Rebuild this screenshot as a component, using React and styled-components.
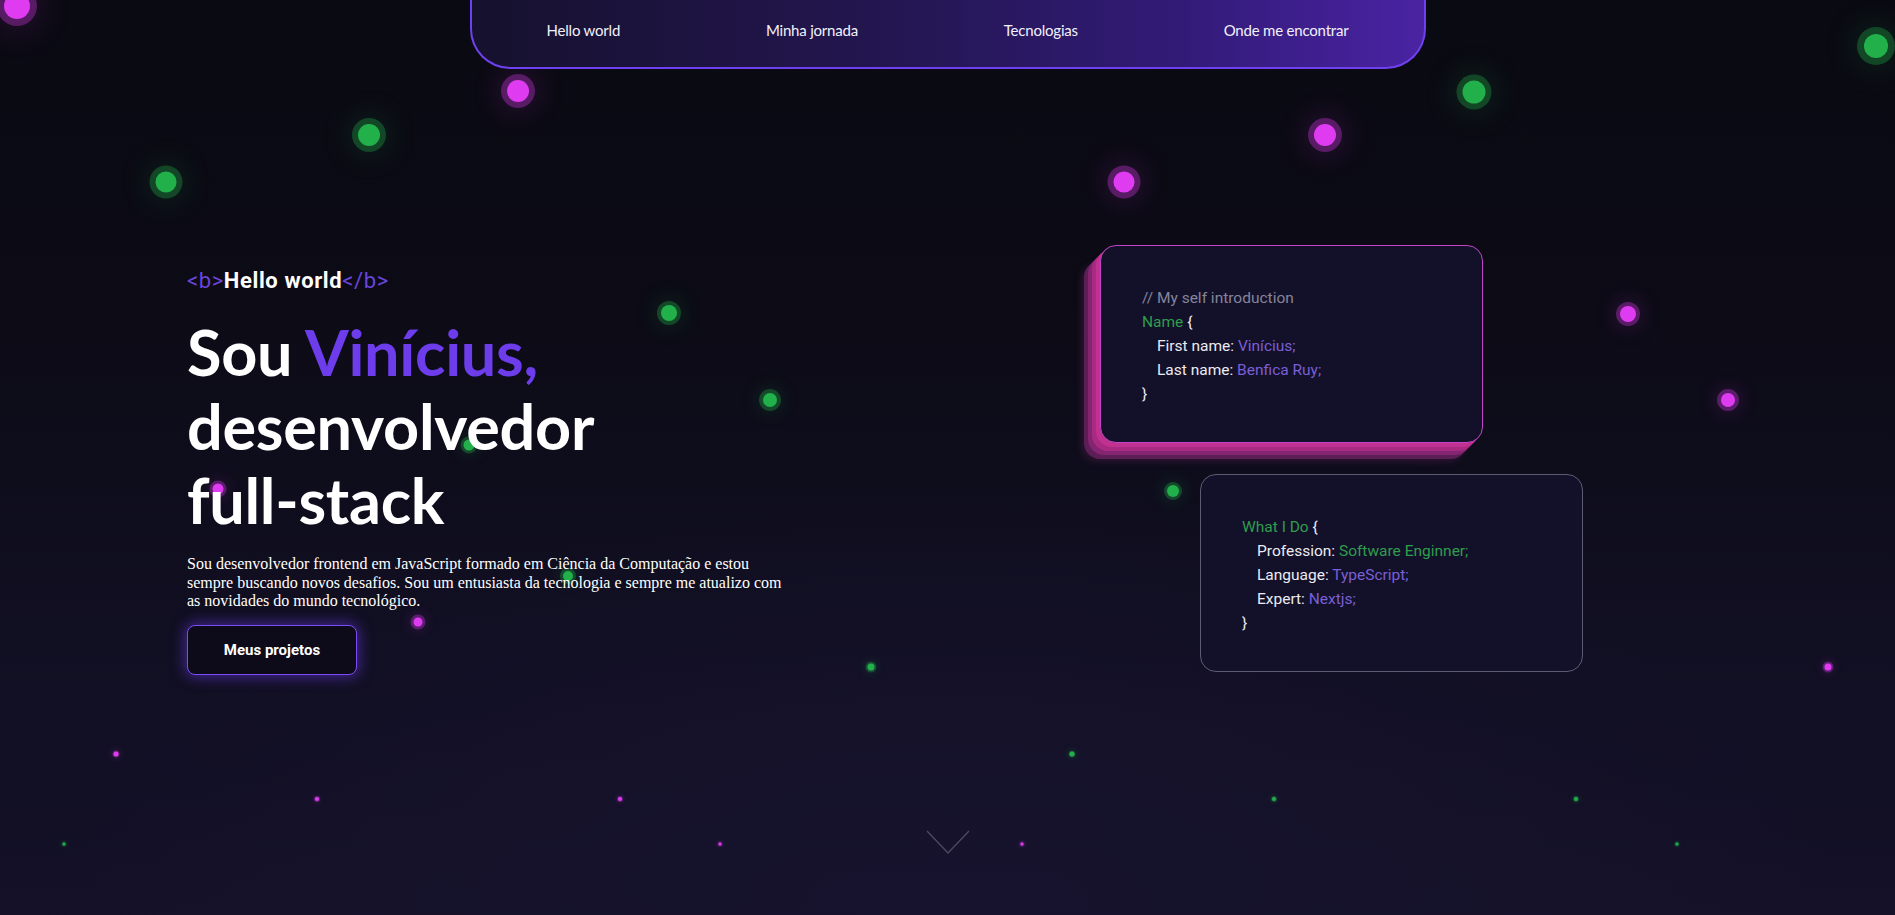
import React from 'react'
import styled, { createGlobalStyle } from 'styled-components'

const GlobalStyle = createGlobalStyle`
  * { box-sizing: border-box; }
  html, body { margin: 0; padding: 0; background: #0b0b14; }
  body { overflow: hidden; }
`

const Page = styled.div`
  position: relative;
  width: 100%;
  height: 915px;
  overflow: hidden;
  background: radial-gradient(ellipse 900px 420px at 50% 100%, #17132e 0%, rgba(23, 19, 46, 0) 100%),
    linear-gradient(180deg, #0a0a12 0%, #0c0b16 35%, #110f22 70%, #141128 100%);
`

const Particles = styled.div`
  position: absolute;
  inset: 0;
  pointer-events: none;
  z-index: 0;
`

const Dot = styled.span`
  position: absolute;
  border-radius: 50%;
  transform: translate(-50%, -50%);
  width: ${p => p.$s}px;
  height: ${p => p.$s}px;
  background: ${p => (p.$c === 'g' ? '#22b04b' : '#df3cf2')};
  box-shadow: 0 0 0 ${p => Math.max(1, Math.round(p.$s * 0.28))}px
      ${p => (p.$c === 'g' ? 'rgba(34,176,75,0.32)' : 'rgba(223,60,242,0.32)')},
    0 0 ${p => p.$s * 1.4}px ${p => p.$s * 0.4}px
      ${p => (p.$c === 'g' ? 'rgba(34,176,75,0.16)' : 'rgba(223,60,242,0.16)')};
`

const Nav = styled.nav`
  position: relative;
  z-index: 2;
  margin: 0 auto;
  width: 956px;
  height: 69px;
  display: flex;
  align-items: center;
  justify-content: space-between;
  padding: 0 75px 7px;
  border: 2px solid #6f40ef;
  border-top: none;
  border-radius: 0 0 40px 40px;
  background: linear-gradient(90deg, #16112e 0%, #241652 45%, #321b78 75%, #4a23a2 100%);
`

const NavLink = styled.a`
  font-family: Lato, 'Open Sans', sans-serif;
  font-size: 15px;
  color: #f2f0fa;
  text-decoration: none;
  letter-spacing: -0.2px;
`

const Hero = styled.main`
  position: relative;
  z-index: 1;
  display: flex;
  justify-content: space-between;
  align-items: flex-start;
  padding: 176px 312px 0 187px;
`

const Intro = styled.section`
  width: 610px;
  padding-top: 24px;
`

const Tag = styled.div`
  font-family: Roboto, 'Open Sans', sans-serif;
  font-size: 22px;
  line-height: 24px;
  color: #fff;
  font-weight: 700;
  letter-spacing: 0.6px;
`

const TagMark = styled.span`
  color: #6a45dc;
  font-weight: 400;
`

const Title = styled.h1`
  margin: 22px 0 0;
  font-family: Lato, 'Open Sans', sans-serif;
  font-weight: 700;
  font-size: 63px;
  line-height: 74px;
  color: #fff;
  letter-spacing: -0.3px;
`

const Accent = styled.span`
  color: #6d3ceb;
`

const Lead = styled.p`
  margin: 18px 0 0;
  font-family: 'Liberation Serif', 'Times New Roman', serif;
  font-size: 16px;
  line-height: 18.5px;
  color: #fff;
`

const Button = styled.button`
  margin-top: 14px;
  width: 170px;
  height: 50px;
  border: 1px solid #7b4cf5;
  border-radius: 8px;
  background: #0d0b1a;
  color: #fff;
  font-family: Roboto, sans-serif;
  font-weight: 700;
  font-size: 15px;
  box-shadow: 0 0 14px 2px rgba(110, 60, 240, 0.55);
  cursor: pointer;
`

const Cards = styled.aside`
  display: flex;
  flex-direction: column;
  align-items: flex-end;
  gap: 31px;
`

const Card = styled.div`
  width: 383px;
  height: 198px;
  padding: 40px 0 0 41px;
  margin-right: ${p => (p.$stack ? 100 : 0)}px;
  border-radius: 16px;
  background: #13112a;
  border: 1px solid ${p => (p.$stack ? '#c443c6' : '#5e5a74')};
  box-shadow: ${p =>
    p.$stack
      ? `-4px 4px 0 #c1318f, -8px 8px 0 #a92a82, -12px 12px 0 #852572, -16px 16px 0 #5b1e55, -19px 19px 6px #2c1430`
      : 'none'};
  font-family: Roboto, 'Open Sans', sans-serif;
  font-size: 15.5px;
  line-height: 24px;
  color: #ecebf2;
`

const Line = styled.div`
  padding-left: ${p => (p.$indent ? 15 : 0)}px;
  white-space: nowrap;
`

const Comment = styled.span`
  color: #85849a;
`

const Key = styled.span`
  color: #2f9d4b;
`

const Value = styled.span`
  color: ${p => (p.$green ? '#2f9d4b' : '#7a5fd6')};
`

const ScrollHint = styled.div`
  position: relative;
  z-index: 1;
  display: flex;
  justify-content: center;
  margin-top: 155px;
`

const dots = [
  [17, 6, 26, 'm'], [518, 91, 22, 'm'], [369, 135, 22, 'g'], [166, 182, 21, 'g'],
  [1124, 182, 21, 'm'], [1325, 135, 22, 'm'], [1474, 92, 23, 'g'], [1876, 46, 24, 'g'],
  [669, 313, 16, 'g'], [770, 400, 14, 'g'], [1628, 314, 16, 'm'], [1728, 400, 14, 'm'],
  [469, 445, 11, 'g'], [218, 489, 11, 'm'], [1426, 446, 12, 'm'], [1173, 491, 12, 'g'],
  [568, 576, 10, 'g'], [418, 622, 9, 'm'], [871, 667, 7, 'g'], [1828, 667, 7, 'm'],
  [116, 754, 5, 'm'], [1072, 754, 5, 'g'], [317, 799, 4, 'm'], [620, 799, 4, 'm'],
  [1274, 799, 4, 'g'], [1576, 799, 4, 'g'], [64, 844, 3, 'g'], [720, 844, 3, 'm'],
  [1022, 844, 3, 'm'], [1677, 844, 3, 'g'],
]

export default function App() {
  return (
    <Page>
      <GlobalStyle />
      <Particles>
        {dots.map(([x, y, s, c], i) => (
          <Dot key={i} $s={s} $c={c} style={{ left: x, top: y }} />
        ))}
      </Particles>

      <Nav>
        <NavLink href="#">Hello world</NavLink>
        <NavLink href="#">Minha jornada</NavLink>
        <NavLink href="#">Tecnologias</NavLink>
        <NavLink href="#">Onde me encontrar</NavLink>
      </Nav>

      <Hero>
        <Intro>
          <Tag>
            <TagMark>&lt;b&gt;</TagMark>Hello world<TagMark>&lt;/b&gt;</TagMark>
          </Tag>
          <Title>
            Sou <Accent>Vinícius,</Accent>
            <br />
            desenvolvedor
            <br />
            full-stack
          </Title>
          <Lead>
            Sou desenvolvedor frontend em JavaScript formado em Ciência da Computação e estou
            sempre buscando novos desafios. Sou um entusiasta da tecnologia e sempre me atualizo com
            as novidades do mundo tecnológico.
          </Lead>
          <Button>Meus projetos</Button>
        </Intro>

        <Cards>
          <Card $stack>
            <Line><Comment>// My self introduction</Comment></Line>
            <Line><Key>Name</Key> {'{'}</Line>
            <Line $indent>First name: <Value>Vinícius;</Value></Line>
            <Line $indent>Last name: <Value>Benfica Ruy;</Value></Line>
            <Line>{'}'}</Line>
          </Card>
          <Card>
            <Line><Key>What I Do</Key> {'{'}</Line>
            <Line $indent>Profession: <Value $green>Software Enginner;</Value></Line>
            <Line $indent>Language: <Value>TypeScript;</Value></Line>
            <Line $indent>Expert: <Value>Nextjs;</Value></Line>
            <Line>{'}'}</Line>
          </Card>
        </Cards>
      </Hero>

      <ScrollHint>
        <svg width="44" height="24" viewBox="0 0 44 24" fill="none">
          <path d="M1 1 L22 23 L43 1" stroke="#4b4860" strokeWidth="1.4" />
        </svg>
      </ScrollHint>
    </Page>
  )
}
